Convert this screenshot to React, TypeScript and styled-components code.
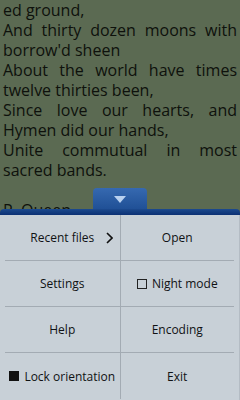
import React from 'react';
import styled, { createGlobalStyle } from 'styled-components';

const GlobalStyle = createGlobalStyle`
  html, body {
    margin: 0;
    padding: 0;
    background: #5b6a52;
  }
  #root {
    width: 240px;
    height: 400px;
  }
`;

type VerseLine = { text: string; justify?: boolean };

const verse: VerseLine[] = [
  { text: 'ed ground,' },
  { text: 'And thirty dozen moons with', justify: true },
  { text: "borrow'd sheen" },
  { text: 'About the world have times', justify: true },
  { text: 'twelve thirties been,' },
  { text: 'Since love our hearts, and', justify: true },
  { text: 'Hymen did our hands,' },
  { text: 'Unite commutual in most', justify: true },
  { text: 'sacred bands.' },
  { text: '' },
  { text: 'P. Queen.' },
];

type MenuItem = {
  label: string;
  check?: 'empty' | 'filled';
  submenu?: boolean;
};

const menuItems: MenuItem[] = [
  { label: 'Recent files', submenu: true },
  { label: 'Open' },
  { label: 'Settings' },
  { label: 'Night mode', check: 'empty' },
  { label: 'Help' },
  { label: 'Encoding' },
  { label: 'Lock orientation', check: 'filled' },
  { label: 'Exit' },
];

export default function App(): JSX.Element {
  return (
    <Screen>
      <GlobalStyle />
      <Reader>
        {verse.map((line, i) => (
          <Line key={i} $justify={!!line.justify}>
            {line.text || '\u00a0'}
          </Line>
        ))}
      </Reader>

      <MenuSheet>
        <Handle>
          <svg width="12" height="7" viewBox="0 0 12 7">
            <path d="M0 0 L12 0 L6 7 Z" fill="#b9d1f0" />
          </svg>
        </Handle>
        <Bar />
        <Grid>
          {menuItems.map((item, i) => (
            <Cell key={item.label} $right={i % 2 === 1} $last={i >= menuItems.length - 2}>
              {item.check && <CheckBox $filled={item.check === 'filled'} />}
              <Label>{item.label}</Label>
              {item.submenu && (
                <Chevron width="7" height="12" viewBox="0 0 7 12">
                  <path d="M1 1 L6 6 L1 11" fill="none" stroke="#111" strokeWidth="1.6" />
                </Chevron>
              )}
            </Cell>
          ))}
        </Grid>
      </MenuSheet>
    </Screen>
  );
}

const Screen = styled.div`
  position: relative;
  width: 240px;
  height: 400px;
  overflow: hidden;
  background: #5b6a52;
`;

const Reader = styled.div`
  padding: 0 3px;
  font-family: 'Open Sans', 'DejaVu Sans', sans-serif;
  font-size: 16px;
  line-height: 20px;
  color: #0e110c;
`;

const Line = styled.div<{ $justify: boolean }>`
  text-align: ${(p) => (p.$justify ? 'justify' : 'left')};
  text-align-last: ${(p) => (p.$justify ? 'justify' : 'left')};
  white-space: ${(p) => (p.$justify ? 'normal' : 'nowrap')};
`;

const MenuSheet = styled.div`
  position: absolute;
  left: 0;
  right: 0;
  bottom: 0;
  display: flex;
  flex-direction: column;
  align-items: center;
`;

const Handle = styled.div`
  width: 54px;
  height: 22px;
  margin-bottom: -1px;
  border-radius: 4px 4px 0 0;
  background: linear-gradient(#3669b0, #1f4f95);
  display: flex;
  align-items: center;
  justify-content: center;
  padding-top: 1px;
  box-sizing: border-box;
`;

const Bar = styled.div`
  align-self: stretch;
  height: 6px;
  border-radius: 4px 4px 0 0;
  background: linear-gradient(#1c4a8e, #0c3174);
`;

const Grid = styled.div`
  align-self: stretch;
  display: grid;
  grid-template-columns: 1fr 1fr;
  grid-auto-rows: 46px;
  background: #c8d0d7;
  padding-bottom: 1px;
  border-right: 1px solid #b4bcc4;
`;

const Cell = styled.div<{ $right: boolean; $last: boolean }>`
  position: relative;
  display: flex;
  align-items: center;
  justify-content: center;
  gap: 5px;
  font-family: 'Open Sans', 'DejaVu Sans', sans-serif;
  font-size: 12px;
  color: #101214;
  border-left: ${(p) => (p.$right ? '1px solid #a3abb3' : 'none')};
  margin-left: ${(p) => (p.$right ? '0' : '5px')};
  margin-right: ${(p) => (p.$right ? '5px' : '0')};
  border-bottom: ${(p) => (p.$last ? 'none' : '1px solid #a3abb3')};
`;

const Label = styled.span`
  white-space: nowrap;
`;

const CheckBox = styled.span<{ $filled: boolean }>`
  width: ${(p) => (p.$filled ? '10px' : '8px')};
  height: ${(p) => (p.$filled ? '10px' : '8px')};
  background: ${(p) => (p.$filled ? '#111' : 'transparent')};
  border: ${(p) => (p.$filled ? 'none' : '1px solid #222')};
  flex: none;
`;

const Chevron = styled.svg`
  position: absolute;
  right: 7px;
  top: 50%;
  margin-top: -6px;
`;
